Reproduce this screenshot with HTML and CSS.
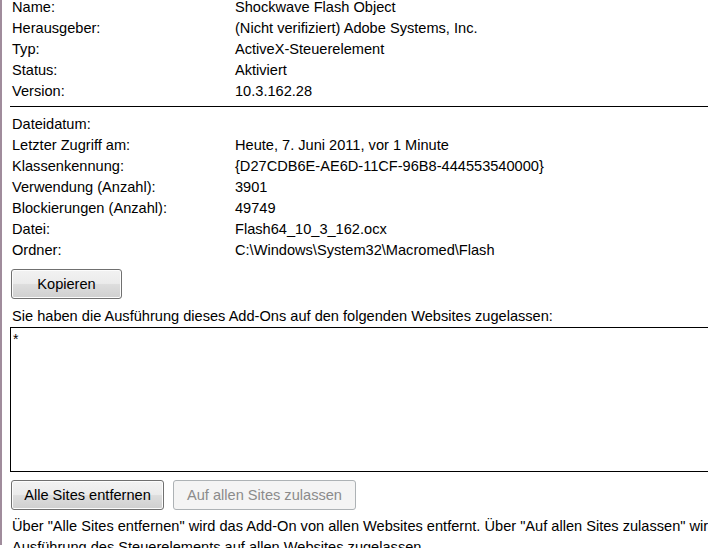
FILE: index.html
```html
<!DOCTYPE html>
<html lang="de">
<head>
<meta charset="utf-8">
<title>Add-On Details</title>
<link rel="stylesheet" href="styles.css">
</head>
<body>
<div class="frame">
  <div class="content">
    <dl class="props first">
      <dt>Name:</dt><dd>Shockwave Flash Object</dd>
      <dt>Herausgeber:</dt><dd>(Nicht verifiziert) Adobe Systems, Inc.</dd>
      <dt>Typ:</dt><dd>ActiveX-Steuerelement</dd>
      <dt>Status:</dt><dd>Aktiviert</dd>
      <dt>Version:</dt><dd>10.3.162.28</dd>
    </dl>
    <hr class="sep">
    <dl class="props second">
      <dt>Dateidatum:</dt><dd></dd>
      <dt>Letzter Zugriff am:</dt><dd>Heute, 7. Juni 2011, vor 1 Minute</dd>
      <dt>Klassenkennung:</dt><dd>{D27CDB6E-AE6D-11CF-96B8-444553540000}</dd>
      <dt>Verwendung (Anzahl):</dt><dd>3901</dd>
      <dt>Blockierungen (Anzahl):</dt><dd>49749</dd>
      <dt>Datei:</dt><dd>Flash64_10_3_162.ocx</dd>
      <dt>Ordner:</dt><dd>C:\Windows\System32\Macromed\Flash</dd>
    </dl>
    <button class="btn copy">Kopieren</button>
    <p class="caption">Sie haben die Ausführung dieses Add-Ons auf den folgenden Websites zugelassen:</p>
    <div class="listbox">*</div>
    <div class="actions">
      <button class="btn remove">Alle Sites entfernen</button>
      <button class="btn allow" disabled>Auf allen Sites zulassen</button>
    </div>
    <p class="note">Über "Alle Sites entfernen" wird das Add-On von allen Websites entfernt. Über "Auf allen Sites zulassen" wird die Ausführung des Steuerelements auf allen Websites zugelassen.</p>
  </div>
</div>
</body>
</html>
```

FILE: styles.css
```css
html, body {
  margin: 0;
  padding: 0;
  background: #ffffff;
  overflow: hidden;
  width: 708px;
  height: 548px;
}

.frame {
  border-left: 2px solid #a08c9c;
  height: 548px;
  width: 900px;
}

.content {
  padding-left: 10px;
  width: 780px;
  font-family: "Liberation Sans", Arial, sans-serif;
  font-size: 14.6px;
  line-height: 21px;
  color: #000;
}

.props {
  display: grid;
  grid-template-columns: 223px 1fr;
  margin: 0;
}

.props dt, .props dd {
  margin: 0;
  height: 21px;
  white-space: nowrap;
}

.props.first {
  margin-top: -3px;
}

.sep {
  border: 0;
  border-top: 1px solid #000;
  margin: 4px 0 7px -2px;
  height: 0;
  width: 800px;
}

.props.second {
  margin-bottom: 8px;
}

.btn {
  display: block;
  font-family: "Liberation Sans", Arial, sans-serif;
  font-size: 14.6px;
  color: #000;
  height: 30px;
  border: 1px solid #707070;
  border-radius: 3px;
  background: linear-gradient(to bottom, #f2f2f2 0%, #ebebeb 48%, #dddddd 52%, #cfcfcf 100%);
  box-shadow: inset 0 0 0 1px #fcfcfc;
  padding: 0;
}

.copy {
  width: 111px;
  margin-left: -1px;
}

.caption {
  margin: 7px 0 0 0;
  white-space: nowrap;
}

.listbox {
  margin-left: -2px;
  width: 800px;
  height: 145px;
  border: 1px solid #000;
  line-height: 15px;
  padding: 4px 2px 0;
  box-sizing: border-box;
  font-size: 14px;
}

.actions {
  display: flex;
  gap: 9px;
  margin: 8px 0 0 -1px;
}

.remove {
  width: 153px;
}

.allow {
  width: 183px;
  color: #8b8b8b;
  border-color: #adb2b5;
  background: #f4f4f4;
  box-shadow: none;
}

.note {
  margin: 6px 0 0 0;
}
```
